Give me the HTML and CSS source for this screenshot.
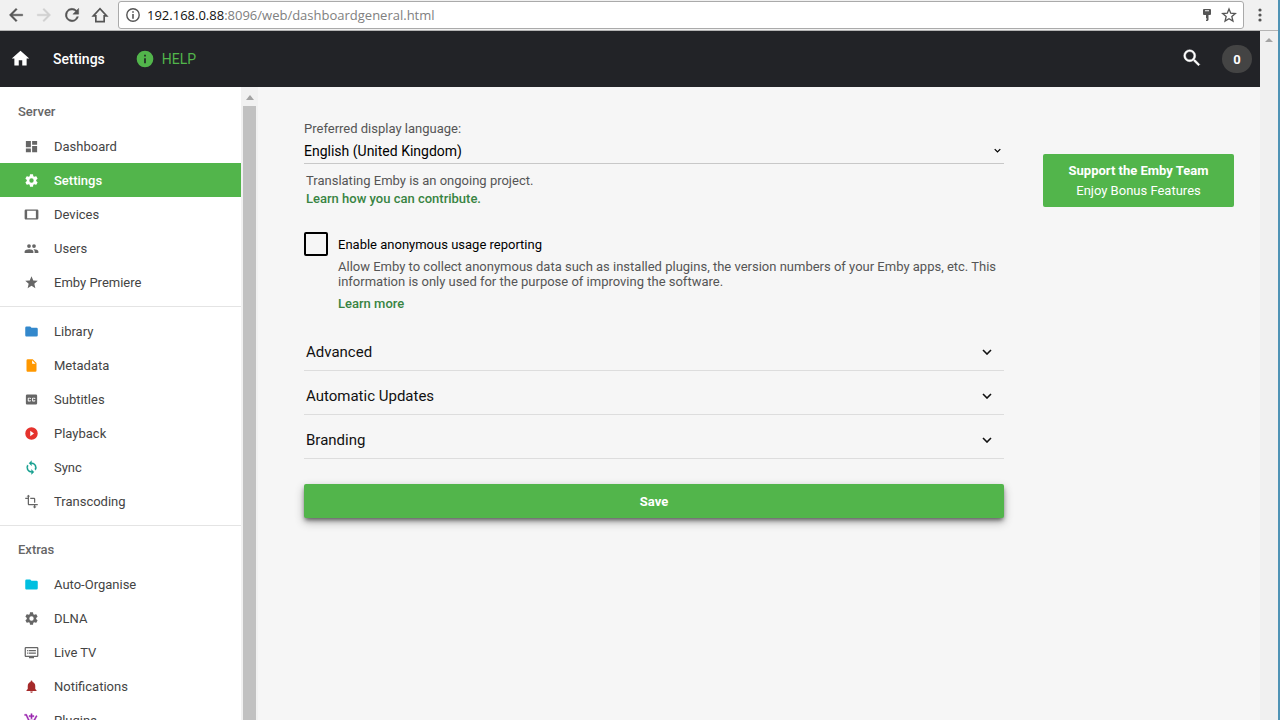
FILE: index.html
```html
<!DOCTYPE html>
<html lang="en">
<head>
<meta charset="utf-8">
<title>Settings</title>
<link rel="stylesheet" href="styles.css">
</head>
<body>
<div class="browser-bar">
  <button class="nav-btn" aria-label="Back"><svg viewBox="0 0 24 24"><path d="M20 11H7.8l5.6-5.6L12 4l-8 8 8 8 1.4-1.4L7.8 13H20z" stroke="currentColor" stroke-width=".5"/></svg></button>
  <button class="nav-btn disabled" aria-label="Forward" disabled><svg viewBox="0 0 24 24"><path d="M12 4l-1.4 1.4 5.6 5.6H4v2h12.2l-5.6 5.6L12 20l8-8z" stroke="currentColor" stroke-width=".5"/></svg></button>
  <button class="nav-btn" aria-label="Reload"><svg viewBox="0 0 24 24"><path d="M17.65 6.35A8 8 0 1 0 19.73 14h-2.08A6 6 0 1 1 12 6c1.66 0 3.14.69 4.22 1.78L13 11h7V4z" stroke="currentColor" stroke-width=".5"/></svg></button>
  <button class="nav-btn" aria-label="Home"><svg viewBox="0 0 24 24"><path d="M4 13l8-8.500 8 8.500h-3v7H7v-7z" fill="none" stroke="currentColor" stroke-width="2"/></svg></button>
  <div class="address">
    <svg class="info" viewBox="0 0 16 16"><circle cx="8" cy="8" r="6.2" fill="none" stroke="currentColor" stroke-width="1.4"/><path d="M7.2 4.2h1.6v1.6H7.2zM7.2 7h1.6v4.8H7.2z"/></svg>
    <span class="url"><span class="host">192.168.0.88</span>:8096/web/dashboardgeneral.html</span>
    <svg class="key" viewBox="0 0 12 14"><path fill-rule="evenodd" d="M3 1h6a1 1 0 0 1 1 1v4a1 1 0 0 1-1 1H7.500v5L6.500 13H5v-1.500h1v-1H5V7H3a1 1 0 0 1-1-1V2a1 1 0 0 1 1-1zm1 1.200v1h4v-1z"/></svg>
    <svg class="star" viewBox="0 0 24 24"><path d="M12 3l2.600 6.300 6.900.6-5.200 4.500 1.600 6.700L12 17.500l-5.900 3.600 1.600-6.700-5.200-4.500 6.900-.6z" fill="none" stroke="currentColor" stroke-width="2"/></svg>
  </div>
  <button class="menu-btn" aria-label="Menu"><svg viewBox="0 0 16 16"><circle cx="8" cy="3" r="1.600"/><circle cx="8" cy="8" r="1.600"/><circle cx="8" cy="13" r="1.600"/></svg></button>
</div>
<div class="viewport">
  <div class="app">
    <header class="app-header">
      <a class="home" href="#" aria-label="Home"><svg viewBox="0 0 24 24"><path d="M10 20v-6h4v6h5v-8h3L12 3 2 12h3v8z"/></svg></a>
      <h1>Settings</h1>
      <a class="help" href="#"><svg viewBox="0 0 24 24"><path d="M12 2a10 10 0 1 0 0 20 10 10 0 0 0 0-20zm1 15h-2v-6h2v6zm0-8h-2V7h2v2z"/></svg>HELP</a>
      <button class="search" aria-label="Search"><svg viewBox="0 0 24 24"><path d="M15.500 14h-.79l-.28-.27A6.470 6.470 0 0 0 16 9.500 6.500 6.500 0 1 0 9.500 16c1.610 0 3.090-.59 4.230-1.570l.27.28v.79l5 4.990L20.490 19l-4.990-5zm-6 0a4.500 4.500 0 1 1 0-9 4.500 4.500 0 0 1 0 9z" stroke="currentColor" stroke-width=".5"/></svg></button>
      <button class="count">0</button>
    </header>
    <div class="body">
      <nav class="sidebar">
        <section>
          <h2>Server</h2>
          <a href="#"><svg viewBox="0 0 24 24"><path d="M3 13h8V3H3v10zm0 8h8v-6H3v6zm10 0h8V11h-8v10zm0-18v6h8V3h-8z"/></svg>Dashboard</a>
          <a href="#" class="active"><svg viewBox="0 0 24 24"><path d="M19.430 12.980c.04-.32.070-.64.070-.98s-.03-.66-.07-.98l2.110-1.650c.19-.15.240-.42.120-.64l-2-3.460c-.12-.22-.39-.3-.61-.22l-2.490 1c-.52-.4-1.080-.73-1.690-.98l-.38-2.650A.49.490 0 0 0 14 2h-4c-.25 0-.46.180-.49.420l-.38 2.650c-.61.250-1.170.590-1.690.98l-2.490-1c-.23-.09-.49 0-.61.220l-2 3.460c-.13.220-.07.490.12.640l2.110 1.650c-.04.320-.07.650-.07.980s.03.660.07.980l-2.110 1.650c-.19.150-.24.420-.12.640l2 3.460c.12.220.39.300.61.220l2.490-1c.52.400 1.080.730 1.690.98l.38 2.650c.03.240.24.420.49.420h4c.25 0 .46-.18.490-.42l.38-2.650c.61-.25 1.170-.59 1.690-.98l2.490 1c.23.090.49 0 .61-.22l2-3.460c.12-.22.070-.49-.12-.64zM12 15.500a3.500 3.500 0 1 1 0-7 3.500 3.500 0 0 1 0 7z"/></svg>Settings</a>
          <a href="#"><svg viewBox="0 0 24 24"><path d="M21 4H3a2 2 0 0 0-2 2v12c0 1.100.9 2 2 2h18a2 2 0 0 0 2-2V6a2 2 0 0 0-2-2zm-2 14H5V6h14v12z"/></svg>Devices</a>
          <a href="#"><svg viewBox="0 0 24 24"><path d="M16 11a3 3 0 1 0 0-6 3 3 0 0 0 0 6zm-8 0a3 3 0 1 0 0-6 3 3 0 0 0 0 6zm0 2c-2.330 0-7 1.170-7 3.500V19h14v-2.500C15 14.170 10.330 13 8 13zm8 0c-.29 0-.62.020-.97.050 1.160.84 1.970 1.970 1.970 3.450V19h6v-2.500c0-2.330-4.670-3.500-7-3.500z"/></svg>Users</a>
          <a href="#"><svg viewBox="0 0 24 24"><path d="M12 17.270L18.180 21l-1.640-7.030L22 9.240l-7.190-.61L12 2 9.190 8.630 2 9.240l5.460 4.730L5.820 21z"/></svg>Emby Premiere</a>
        </section>
        <section>
          <a href="#"><svg class="blue" viewBox="0 0 24 24"><path d="M10 4H4a2 2 0 0 0-2 2v12c0 1.100.9 2 2 2h16a2 2 0 0 0 2-2V8a2 2 0 0 0-2-2h-8z"/></svg>Library</a>
          <a href="#"><svg class="orange" viewBox="0 0 24 24"><path d="M6 2a2 2 0 0 0-2 2v16c0 1.100.89 2 1.990 2H18a2 2 0 0 0 2-2V8l-6-6H6zm7 7V3.500L18.500 9H13z"/></svg>Metadata</a>
          <a href="#"><svg viewBox="0 0 24 24"><path d="M19 4H5a2 2 0 0 0-2 2v12c0 1.100.89 2 2 2h14a2 2 0 0 0 2-2V6a2 2 0 0 0-2-2zm-8 7H9.500v-.5h-2v3h2V13H11v1c0 .55-.45 1-1 1H7c-.55 0-1-.45-1-1v-4c0-.55.450-1 1-1h3c.55 0 1 .45 1 1v1zm7 0h-1.500v-.5h-2v3h2V13H18v1c0 .55-.45 1-1 1h-3c-.55 0-1-.45-1-1v-4c0-.55.450-1 1-1h3c.55 0 1 .45 1 1v1z"/></svg>Subtitles</a>
          <a href="#"><svg class="red" viewBox="0 0 24 24"><path d="M12 2a10 10 0 1 0 0 20 10 10 0 0 0 0-20zm-2 14.500v-9l6 4.500-6 4.500z"/></svg>Playback</a>
          <a href="#"><svg class="teal" viewBox="0 0 24 24"><path d="M12 4V1L8 5l4 4V6a6 6 0 0 1 5.240 8.800l1.460 1.460A8 8 0 0 0 12 4zm0 14a6 6 0 0 1-5.240-8.800L5.300 7.740A8 8 0 0 0 12 20v3l4-4-4-4v3z" stroke="currentColor" stroke-width=".5"/></svg>Sync</a>
          <a href="#"><svg viewBox="0 0 24 24"><path d="M22 18v-2H8V4h2L7 1 4 4h2v2H2v2h4v8c0 1.100.9 2 2 2h8v2h-2l3 3 3-3h-2v-2h4zM10 8h6v6h2V8a2 2 0 0 0-2-2h-6v2z"/></svg>Transcoding</a>
        </section>
        <section>
          <h2>Extras</h2>
          <a href="#"><svg class="cyan" viewBox="0 0 24 24"><path d="M10 4H4a2 2 0 0 0-2 2v12c0 1.100.9 2 2 2h16a2 2 0 0 0 2-2V8a2 2 0 0 0-2-2h-8z"/></svg>Auto-Organise</a>
          <a href="#"><svg viewBox="0 0 24 24"><path d="M19.430 12.980c.04-.32.070-.64.070-.98s-.03-.66-.07-.98l2.110-1.650c.19-.15.240-.42.120-.64l-2-3.460c-.12-.22-.39-.3-.61-.22l-2.490 1c-.52-.4-1.080-.73-1.690-.98l-.38-2.650A.49.490 0 0 0 14 2h-4c-.25 0-.46.180-.49.420l-.38 2.650c-.61.250-1.170.590-1.690.98l-2.490-1c-.23-.09-.49 0-.61.220l-2 3.460c-.13.220-.07.490.12.640l2.110 1.650c-.04.320-.07.650-.07.980s.03.660.07.980l-2.110 1.650c-.19.150-.24.420-.12.640l2 3.460c.12.220.39.300.61.220l2.490-1c.52.400 1.080.730 1.690.98l.38 2.650c.03.240.24.420.49.420h4c.25 0 .46-.18.490-.42l.38-2.650c.61-.25 1.170-.59 1.690-.98l2.490 1c.23.090.49 0 .61-.22l2-3.460c.12-.22.070-.49-.12-.64zM12 15.500a3.500 3.500 0 1 1 0-7 3.500 3.500 0 0 1 0 7z"/></svg>DLNA</a>
          <a href="#"><svg viewBox="0 0 24 24"><path d="M21 3H3a2 2 0 0 0-2 2v12c0 1.100.9 2 2 2h5v2h8v-2h5a2 2 0 0 0 2-2V5a2 2 0 0 0-2-2zm0 14H3V5h18v12zm-2-9H8v2h11V8zm0 4H8v2h11v-2zM7 8H5v2h2V8zm0 4H5v2h2v-2z"/></svg>Live TV</a>
          <a href="#"><svg class="maroon" viewBox="0 0 24 24"><path d="M12 22a2 2 0 0 0 2-2h-4c0 1.100.89 2 2 2zm6-6v-5c0-3.070-1.640-5.640-4.500-6.320V4a1.500 1.500 0 0 0-3 0v.68C7.630 5.360 6 7.920 6 11v5l-2 2v1h16v-1z"/></svg>Notifications</a>
          <a href="#"><svg class="purple" viewBox="0 0 24 24"><path d="M11 9h2V6h3V4h-3V1h-2v3H8v2h3v3zm-4 9a2 2 0 1 0 0 4 2 2 0 0 0 0-4zm10 0a2 2 0 1 0 0 4 2 2 0 0 0 0-4zm-9.830-3.250l.03-.12.900-1.630h7.450c.75 0 1.410-.41 1.750-1.030l3.860-7.010L19.420 4l-1.100 2-2.760 5H8.530L4.270 2H1v2h2l3.600 7.590-1.350 2.450C4.520 15.370 5.480 17 7 17h12v-2H7.420a.25.250 0 0 1-.25-.25z" stroke="currentColor" stroke-width=".6"/></svg>Plugins</a>
        </section>
      </nav>
      <div class="side-scroll"><svg viewBox="0 0 8 5"><path d="M4 0l4 5H0z"/></svg><div class="thumb"></div></div>
      <main>
        <form class="settings">
          <label class="field-label" for="lang">Preferred display language:</label>
          <div class="select-wrap">
            <select id="lang"><option>English (United Kingdom)</option></select>
            <svg viewBox="0 0 10 6"><path d="M1 1l4 4 4-4" fill="none" stroke="currentColor" stroke-width="1.800"/></svg>
          </div>
          <div class="hint">Translating Emby is an ongoing project.<br><a href="#">Learn how you can contribute.</a></div>
          <div class="check">
            <input type="checkbox" id="usage">
            <label for="usage">Enable anonymous usage reporting</label>
          </div>
          <div class="check-info">
            <p>Allow Emby to collect anonymous data such as installed plugins, the version numbers of your Emby apps, etc. This information is only used for the purpose of improving the software.</p>
            <a href="#">Learn more</a>
          </div>
          <button type="button" class="collapse">Advanced<svg viewBox="0 0 10 6"><path d="M1 1l4 4 4-4" fill="none" stroke="currentColor" stroke-width="1.600"/></svg></button>
          <button type="button" class="collapse">Automatic Updates<svg viewBox="0 0 10 6"><path d="M1 1l4 4 4-4" fill="none" stroke="currentColor" stroke-width="1.600"/></svg></button>
          <button type="button" class="collapse">Branding<svg viewBox="0 0 10 6"><path d="M1 1l4 4 4-4" fill="none" stroke="currentColor" stroke-width="1.600"/></svg></button>
          <button type="button" class="save">Save</button>
        </form>
        <a class="support" href="#"><strong>Support the Emby Team</strong><span>Enjoy Bonus Features</span></a>
      </main>
    </div>
  </div>
  <div class="page-scroll"><svg viewBox="0 0 8 4"><path d="M4 0l4 4H0z"/></svg></div>
</div>
</body>
</html>
```
FILE: styles.css
```css
* { box-sizing: border-box; }
body {
  margin: 0;
  height: 100vh;
  display: flex;
  flex-direction: column;
  overflow: hidden;
  border-right: 2px solid #4f93b5;
  font-family: Roboto, "Liberation Sans", sans-serif;
  font-size: 13px;
  color: #000;
  background: #f0f0f0;
}
a { text-decoration: none; }
button { font: inherit; border: 0; background: none; padding: 0; color: inherit; }
svg { display: block; flex: none; fill: currentColor; }

/* Browser toolbar */
.browser-bar {
  flex: none;
  height: 31px;
  display: flex;
  align-items: center;
  gap: 8px;
  padding: 0 10px 0 6px;
  background: #f1f1f1;
  border-bottom: 1px solid #b4b4b4;
  color: #555;
}
.nav-btn svg { width: 20px; height: 20px; }
.nav-btn.disabled { color: #d0d0d0; }
.address {
  flex: 1;
  height: 28px;
  display: flex;
  align-items: center;
  padding: 0 6px;
  border: 1px solid #aaa;
  border-radius: 3px;
  background: #fff;
}
.info { width: 16px; height: 16px; }
.url {
  flex: 1;
  padding-left: 6px;
  font-family: "Open Sans", sans-serif;
  font-size: 13px;
  color: #808080;
}
.host { color: #111; }
.key { width: 12px; height: 14px; margin-right: 8px; }
.star { width: 16px; height: 16px; }
.menu-btn svg { width: 16px; height: 16px; }

/* Page frame */
.viewport { flex: 1; min-height: 0; display: flex; }
.app { flex: 1; min-width: 0; display: flex; flex-direction: column; }
.page-scroll { flex: none; width: 18px; padding: 7px 5px; background: #f0f0f0; color: #a3a3a3; }
.page-scroll svg { width: 8px; height: 4px; }

.app-header {
  flex: none;
  height: 56px;
  display: flex;
  align-items: center;
  padding: 0 8px 0 10px;
  background: #222327;
  color: #fff;
}
.home { padding-bottom: 2px; color: #fff; }
.home svg { width: 21px; height: 21px; }
h1 { margin: 0 0 0 22px; font-size: 14px; font-weight: 500; }
.help {
  display: flex;
  align-items: center;
  gap: 7px;
  margin-left: 30px;
  font-size: 14px;
  color: #52b54b;
}
.help svg { width: 20px; height: 20px; }
.search { margin-left: auto; padding-bottom: 3px; }
.search svg { width: 22px; height: 22px; }
.count {
  width: 30px;
  height: 28px;
  margin-left: 19px;
  border-radius: 14px;
  background: #444;
  font-weight: 700;
}

/* Sidebar */
.body { flex: 1; min-height: 0; display: flex; background: #f6f6f6; }
.sidebar { flex: none; width: 241px; padding-top: 1px; overflow: hidden; background: #fff; }
.sidebar section { padding: 7px 0; border-bottom: 1px solid #e4e4e4; }
.sidebar h2 {
  margin: 0;
  padding: 0 18px;
  font-size: 13px;
  line-height: 34px;
  font-weight: 500;
  color: #666;
}
.sidebar a {
  display: flex;
  align-items: center;
  gap: 15px;
  height: 34px;
  padding-left: 24px;
  color: #444;
}
.sidebar a svg { width: 15px; height: 15px; color: #666; }
.sidebar .active { background: #52b54b; color: #fff; font-weight: 500; }
.sidebar .active svg { color: #fff; }
.sidebar a .blue { color: #3388cc; }
.sidebar a .orange { color: #ff9800; }
.sidebar a .red { color: #e5332d; }
.sidebar a .teal { color: #159f8f; }
.sidebar a .cyan { color: #00bfe0; }
.sidebar a .maroon { color: #a52a2a; }
.sidebar a .purple { color: #9c27b0; }
.side-scroll {
  flex: none;
  width: 17px;
  display: flex;
  flex-direction: column;
  align-items: center;
  gap: 6px;
  padding: 8px 2px 0;
  background: #f1f1f1;
  color: #a3a3a3;
}
.side-scroll svg { width: 8px; height: 5px; }
.thumb { flex: 1; width: 13px; background: #c1c1c1; }

/* Settings form */
main {
  flex: 1;
  min-width: 0;
  display: flex;
  align-items: flex-start;
  gap: 39px;
  padding: 32px 26px 0 46px;
}
.settings { flex: 1; min-width: 0; color: #555; }
.settings a { color: #388442; font-weight: 500; }
.field-label { display: block; line-height: 19px; }
.select-wrap { position: relative; color: #000; }
.select-wrap select {
  display: block;
  appearance: none;
  width: 100%;
  height: 26px;
  padding: 0;
  border: 0;
  border-bottom: 1px solid #c8c8c8;
  border-radius: 0;
  background: transparent;
  font: inherit;
  font-size: 14px;
  color: #000;
}
.select-wrap svg { position: absolute; right: 3px; top: 10px; width: 7px; height: 5px; }
.hint { padding: 8px 2px 0; line-height: 18px; }
.check { display: flex; align-items: center; gap: 10px; margin-top: 24px; color: #000; }
.check input {
  appearance: none;
  width: 24px;
  height: 24px;
  margin: 0;
  border: 2px solid #000;
  border-radius: 2px;
}
.check-info { padding: 3px 0 0 34px; line-height: 15px; }
.check-info p { margin: 0 0 7px; }
.check-info a { display: block; }
.collapse {
  width: 100%;
  height: 44px;
  display: flex;
  align-items: center;
  justify-content: space-between;
  padding: 6px 12px 0 2px;
  border-bottom: 1px solid #ddd;
  font-size: 15px;
  color: #111;
}
.check-info + .collapse { margin-top: 16px; }
.collapse svg { width: 10px; height: 6px; }
.save {
  display: block;
  width: 100%;
  height: 34px;
  margin-top: 25px;
  border-radius: 2px;
  background: #52b54b;
  box-shadow: 0 3px 4px -1px rgba(0, 0, 0, .5), 0 4px 10px rgba(0, 0, 0, .3);
  color: #fff;
  font-weight: 700;
}
.support {
  flex: none;
  width: 191px;
  margin-top: 35px;
  padding: 7px 0 6px;
  display: flex;
  flex-direction: column;
  align-items: center;
  line-height: 20px;
  border-radius: 2px;
  background: #52b54b;
  color: #fff;
}
.support strong { font-weight: 700; }
```
